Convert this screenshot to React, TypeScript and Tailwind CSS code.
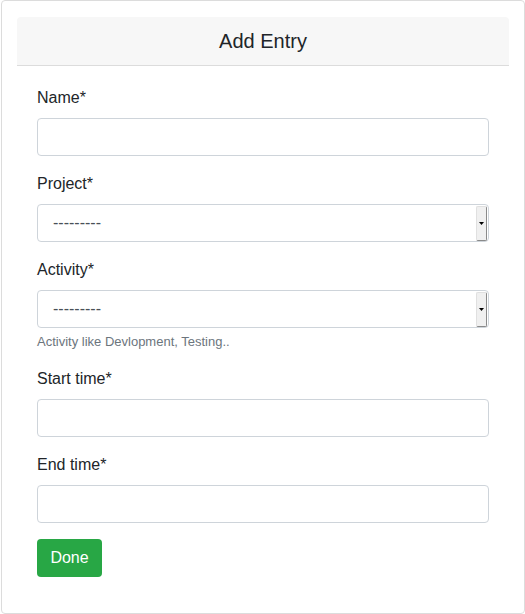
const font = { fontFamily: '"Liberation Sans", Arial, sans-serif' }

function Field({ label, children, help }: { label: string; children: React.ReactNode; help?: string }) {
    return (
        <div className="mb-4">
            <label className="block mb-2 text-base leading-6 text-[#212529]">{label}</label>
            {children}
            {help && <small className="block mt-1 text-[13px] leading-[19px] text-[#6c757d]">{help}</small>}
        </div>
    )
}

function TextInput() {
    return (
        <input
            type="text"
            className="block w-full h-[38px] px-3 border border-[#ced4da] rounded bg-white text-base text-[#495057] outline-none"
        />
    )
}

function FakeSelect() {
    return (
        <div className="flex items-center w-full h-[38px] pl-[15px] pr-[1px] border border-[#ced4da] rounded bg-white text-base text-[#495057]">
            <span className="flex-1">---------</span>
            <span className="flex items-center justify-center w-[11px] h-[35px] bg-[#f0f0f0] border-r border-b border-[#8a8a8a] border-l border-l-[#e0e0e0] border-t border-t-[#e0e0e0] rounded-[2px]">
                <svg width="5" height="3" viewBox="0 0 5 3">
                    <path d="M0 0h5L2.5 3z" fill="#000" />
                </svg>
            </span>
        </div>
    )
}

export default function App() {
    return (
        <div className="bg-white" style={font}>
            <div className="ml-[1px] w-[524px] h-[614px] border border-[#dcdcdc] rounded pt-4 px-[15px]">
                <div className="rounded-t">
                    <div className="h-[49px] bg-[#f7f7f7] border-b border-[#dcdcdc] rounded-t flex items-center justify-center">
                        <h5 className="text-[20px] leading-6 text-[#212529]">Add Entry</h5>
                    </div>
                    <div className="p-5">
                        <Field label="Name*">
                            <TextInput />
                        </Field>
                        <Field label="Project*">
                            <FakeSelect />
                        </Field>
                        <Field label="Activity*" help="Activity like Devlopment, Testing..">
                            <FakeSelect />
                        </Field>
                        <Field label="Start time*">
                            <TextInput />
                        </Field>
                        <Field label="End time*">
                            <TextInput />
                        </Field>
                        <button className="w-[65px] h-[38px] rounded bg-[#28a745] text-white text-base">Done</button>
                    </div>
                </div>
            </div>
        </div>
    )
}
